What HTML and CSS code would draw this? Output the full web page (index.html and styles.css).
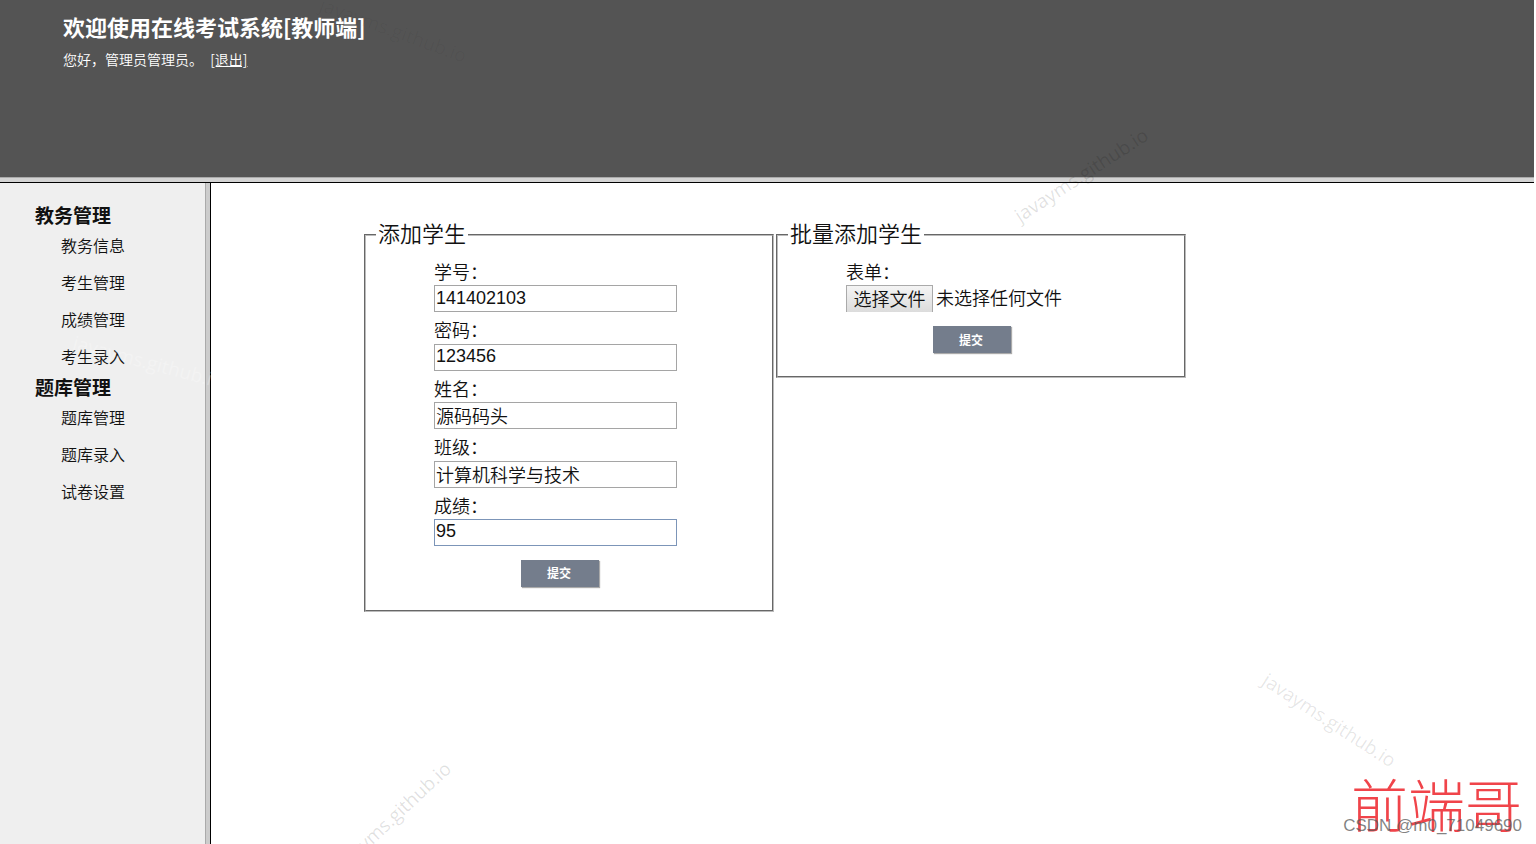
FILE: index.html
```
<!DOCTYPE html>
<html lang="zh-CN">
<head>
<meta charset="utf-8">
<title>在线考试系统</title>
<link rel="stylesheet" href="styles.css">
</head>
<body>
<div class="page">
  <header class="header">
    <h1 class="title">欢迎使用在线考试系统[教师端]</h1>
    <p class="greeting">您好，管理员管理员。 <a class="logout" href="#">[退出]</a></p>
  </header>
  <div class="divider"></div>
  <div class="frames">
    <nav class="sidebar">
      <h2 class="group">教务管理</h2>
      <ul class="menu">
        <li><a href="#">教务信息</a></li>
        <li><a href="#">考生管理</a></li>
        <li><a href="#">成绩管理</a></li>
        <li><a href="#">考生录入</a></li>
      </ul>
      <h2 class="group">题库管理</h2>
      <ul class="menu">
        <li><a href="#">题库管理</a></li>
        <li><a href="#">题库录入</a></li>
        <li><a href="#">试卷设置</a></li>
      </ul>
    </nav>
    <main class="content">
      <form class="form">
        <fieldset class="panel">
          <legend>添加学生</legend>
          <div class="field"><label for="no">学号：</label><input id="no" type="text" value="141402103"></div>
          <div class="field"><label for="pwd">密码：</label><input id="pwd" type="text" value="123456"></div>
          <div class="field"><label for="name">姓名：</label><input id="name" type="text" value="源码码头"></div>
          <div class="field"><label for="cls">班级：</label><input id="cls" type="text" value="计算机科学与技术"></div>
          <div class="field"><label for="score">成绩：</label><input id="score" class="active" type="text" value="95"></div>
          <button class="submit" type="submit">提交</button>
        </fieldset>
      </form>
      <form class="form">
        <fieldset class="panel">
          <legend>批量添加学生</legend>
          <div class="field">
            <label for="file">表单：</label>
            <div class="picker">
              <button id="file" class="choose" type="button">选择文件</button>
              <span>未选择任何文件</span>
            </div>
          </div>
          <button class="submit" type="submit">提交</button>
        </fieldset>
      </form>
    </main>
  </div>
  <div class="marks" aria-hidden="true">
    <span class="mark mark-head">javayms.github.io</span>
    <span class="mark mark-top">javayms.github.io</span>
    <span class="mark mark-side">javayms.github.io</span>
    <span class="mark mark-right">javayms.github.io</span>
    <span class="mark mark-bottom">javayms.github.io</span>
    <span class="brand">前端哥</span>
    <span class="credit">CSDN @m0_71049690</span>
  </div>
</div>
</body>
</html>
```
FILE: styles.css
```
* { box-sizing: border-box; }
body {
  margin: 0;
  background: #fff;
  color: #111;
  font-family: "Liberation Sans", "Noto Sans CJK SC", sans-serif;
  font-weight: 350;
}
.page {
  position: relative;
  display: flex;
  flex-direction: column;
  min-height: 100vh;
  padding-right: 2px;
  overflow: hidden;
}
.header {
  min-height: 177px;
  padding: 10px 63px;
  background: #545454;
  color: #fff;
  font-family: "Noto Sans CJK SC", sans-serif;
}
.title { margin: 0; font-size: 22px; line-height: 32px; }
.greeting { margin: 7px 0 0; font-size: 14px; line-height: 20px; }
.logout { margin-left: 4px; color: #fff; }
.divider {
  height: 6px;
  background: #d3d3d3;
  border-top: 1px solid #aaa;
  border-bottom: 1px solid #000;
}
.frames { display: flex; flex: 1; }
.sidebar {
  flex: none;
  width: 211px;
  padding: 19px 0 0 35px;
  background: #efefef;
  border-right: 1px solid #000;
  box-shadow: inset -4px 0 #ccc, inset -5px 0 #aaa;
  font-family: "Noto Sans CJK SC", sans-serif;
}
.group { margin: 0; font-size: 19px; line-height: 25px; }
.menu { margin: 0; padding: 0 0 0 26px; list-style: none; }
.menu li { padding: 6px 0; line-height: 25px; font-size: 16px; }
.menu li:last-child { padding-bottom: 5px; }
.menu a { color: inherit; text-decoration: none; }
.content {
  display: flex;
  flex: 1;
  align-items: flex-start;
  gap: 2px;
  padding: 36px 153px;
}
.form { flex: none; }
.panel {
  width: 410px;
  margin: 0;
  padding: 11px 10px 23px;
  border: 2px groove #bbb;
  font-size: 18px;
}
.panel legend { padding: 0 2px; font-size: 22px; line-height: 32px; }
.field { display: block; width: 243px; margin: 0 58px 8px; }
.field label { display: block; line-height: 1.3; }
.field input {
  display: block;
  width: 100%;
  height: 27px;
  padding: 0 1px 1px;
  border: 1px solid #a5a5a5;
  color: #111;
  font: 350 18px "Liberation Sans", "Noto Sans CJK SC", sans-serif;
}
.field .active { border-color: #7c95b8; }
.picker {
  display: flex;
  gap: 3px;
  height: 27px;
  overflow: hidden;
  line-height: 28px;
  white-space: nowrap;
}
.choose {
  flex: none;
  width: 87px;
  height: 30px;
  padding: 0 0 4px;
  border: 1px solid #aaa;
  background: linear-gradient(#f4f4f4, #dadada);
  color: #111;
  font: 350 18px/24px "Noto Sans CJK SC", sans-serif;
}
.submit {
  display: block;
  width: 78px;
  height: 27px;
  margin: 14px auto 0 145px;
  padding: 0 2px 1px 0;
  border: 0;
  background: #747d8c;
  box-shadow: 1px 1px 1px #aaa;
  color: #fff;
  font: bold 12px "Noto Sans CJK SC", sans-serif;
}
.marks span { position: absolute; white-space: nowrap; pointer-events: none; }
.mark { color: rgba(0, 0, 0, .12); font: 19px/24px "Open Sans", sans-serif; }
.mark-head { left: 316px; top: 18px; color: rgba(0, 0, 0, .04); transform: rotate(20deg); }
.mark-top { left: 1004px; top: 163px; transform: rotate(-33deg); }
.mark-side { left: 71px; top: 350px; color: rgba(255, 255, 255, .25); transform: rotate(15deg); }
.mark-right { left: 1252px; top: 708px; color: rgba(0, 0, 0, .1); transform: rotate(33deg); }
.mark-bottom { left: 314px; top: 806px; transform: rotate(-43deg); }
.marks .brand {
  right: 14px;
  bottom: 12px;
  color: #f0444a;
  font: 300 57px/60px "Noto Sans CJK SC", sans-serif;
}
.marks .credit { right: 14px; bottom: 8px; color: rgba(90, 90, 90, .75); font-size: 17px; line-height: 20px; }
```
